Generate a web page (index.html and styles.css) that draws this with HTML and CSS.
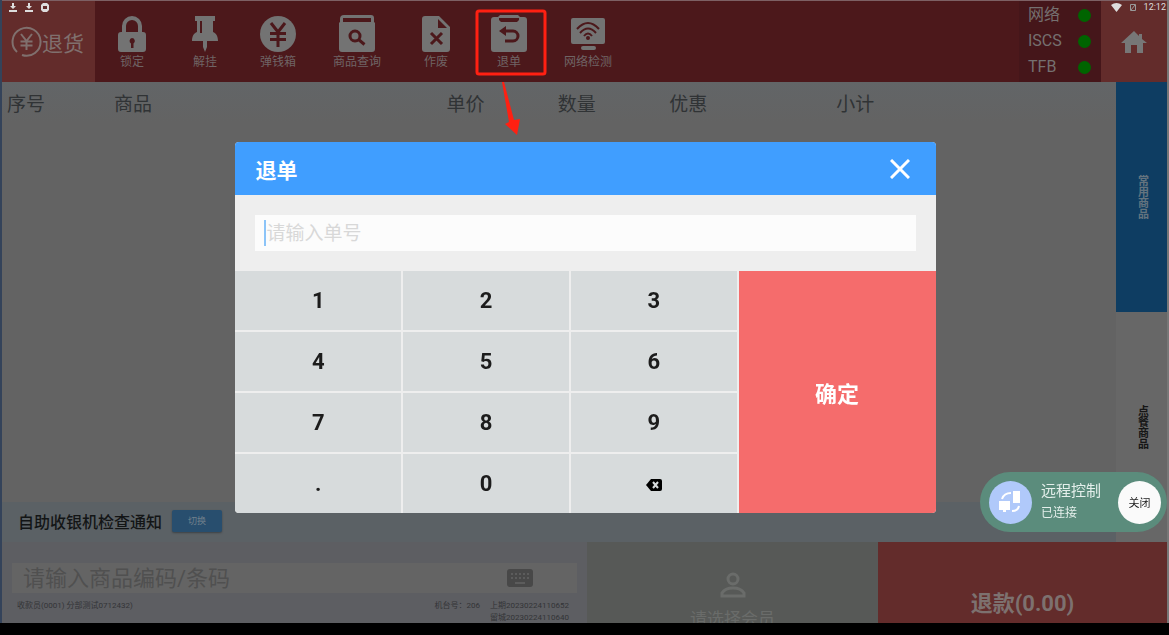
FILE: index.html
```html
<!DOCTYPE html>
<html lang="zh-CN">
<head>
  <meta charset="UTF-8">
  <meta name="viewport" content="width=device-width, initial-scale=1.0">
  <title>收银机 - 退单</title>
  <link rel="stylesheet" href="styles.css">
</head>
<body>
<div class="status-bar">
  <div class="status-left">
    <svg width="8" height="9" viewBox="0 0 8 9"><path d="M3 0h2v3h2L4 6 1 3h2zM0 7h8v2H0z"/></svg>
    <svg width="8" height="9" viewBox="0 0 8 9"><path d="M3 0h2v3h2L4 6 1 3h2zM0 7h8v2H0z"/></svg>
    <svg width="8" height="9" viewBox="0 0 8 9"><path fill-rule="evenodd" d="M2 0h4l2 2v5L6 9H2L0 7V2zM2 3v3h4V3z"/></svg>
  </div>
  <div class="status-right">
    <svg width="11" height="9" viewBox="0 0 11 9"><path d="M0 2Q5.500-2 11 2L5.500 9z"/></svg>
    <svg width="6" height="8" viewBox="0 0 6 8"><path fill="none" stroke="#999" d="M.5 1.500h5v6h-5zM1 7l4-5"/></svg>
    <span>12:12</span>
  </div>
</div>

<header class="topbar">
  <div class="brand">
    <svg width="31" height="31" viewBox="0 0 31 31" fill="none" stroke="currentColor" stroke-width="2">
      <path d="M6 26A14 14 0 1 1 11 29M2 20a14 14 0 0 0 2 4"/>
      <path d="M10 8l5.500 7L21 8M9.500 15.500h12M9.500 19.500h12M15.500 15v9"/>
    </svg>
    <span>退货</span>
  </div>
  <nav class="tools">
    <button class="tool">
      <svg width="36" height="38" viewBox="0 0 36 38"><path fill-rule="evenodd" d="M8 17v-6a10 10 0 0 1 20 0v6h1a3 3 0 0 1 3 3v14a3 3 0 0 1-3 3H7a3 3 0 0 1-3-3V20a3 3 0 0 1 3-3zm4 0h12v-6a6 6 0 0 0-12 0zm6 6a3 3 0 0 0-1 5.500V33h2.500v-4.500A3 3 0 0 0 18 23z"/></svg>
      <span>锁定</span>
    </button>
    <button class="tool">
      <svg width="36" height="38" viewBox="0 0 36 38"><path d="M8 1h20v5h-2v11c3 1 5 4 5 9H20v6l-2 5-2-5v-6H5c0-5 2-8 5-9V6H8z"/><path fill="#4c181b" d="M13 6h2v12h-2z"/></svg>
      <span>解挂</span>
    </button>
    <button class="tool">
      <svg width="36" height="38" viewBox="0 0 36 38"><circle cx="18" cy="19" r="18"/><path class="cut" stroke-width="3" d="M11 8l7 9 7-9M10 18.500h16M10 24.500h16M18 17v15"/></svg>
      <span>弹钱箱</span>
    </button>
    <button class="tool">
      <svg width="36" height="38" viewBox="0 0 36 38"><path fill-rule="evenodd" d="M5 0h27a3 3 0 0 1 3 3v4a2 2 0 0 1 1 2v25a3 3 0 0 1-3 3H3a3 3 0 0 1-3-3V9a2 2 0 0 1 1-2V4a4 4 0 0 1 4-4zM4 3v4h28V3z"/><circle class="cut" cx="16" cy="21" r="5" stroke-width="3"/><path class="cut" stroke-width="3" d="M19.500 24.500l6 5"/></svg>
      <span>商品查询</span>
    </button>
    <button class="tool">
      <svg width="36" height="38" viewBox="0 0 36 38"><path d="M7 1h14l11 11v22a3 3 0 0 1-3 3H7a3 3 0 0 1-3-3V4a3 3 0 0 1 3-3z"/><path fill="#4c181b" d="M20 4v9h9z"/><path class="cut" stroke-width="3" d="M13 18l11 11M24 18L13 29"/></svg>
      <span>作废</span>
    </button>
    <button class="tool marked">
      <svg width="36" height="38" viewBox="0 0 36 38"><path fill-rule="evenodd" d="M9 0h18l2 2h4a3 3 0 0 1 3 3v29a3 3 0 0 1-3 3H3a3 3 0 0 1-3-3V5a3 3 0 0 1 3-3h4zM8 3v2l2 2h16l2-2V3z"/><path class="cut" stroke-width="3" d="M13 16h9a5 5 0 0 1 0 10h-8"/><path fill="#4c181b" d="M8 16l7-5v10z"/></svg>
      <span>退单</span>
      <svg class="mark" width="72" height="128" viewBox="0 0 72 128">
        <rect x="2" y="2" width="68" height="63" rx="2" fill="none" stroke="#ff2012" stroke-width="3"/>
        <path fill="#ff2012" d="M27 73l2 0 10 38 6-1-3 16-12-11 4-2z"/>
      </svg>
    </button>
    <button class="tool">
      <svg width="36" height="38" viewBox="0 0 36 38"><path d="M3 3h30a2 2 0 0 1 2 2v22a2 2 0 0 1-2 2H3a2 2 0 0 1-2-2V5a2 2 0 0 1 2-2zM13 31h11a2 2 0 0 1 0 4H13a2 2 0 0 1 0-4z"/><path class="cut" stroke-width="2" d="M7 14q11-12 22 0M10 18q8-9 16 0M14 21q4-5 8 0"/><circle cx="18" cy="23" r="2" fill="#4c181b"/></svg>
      <span>网络检测</span>
    </button>
  </nav>
  <ul class="links">
    <li>网络<i></i></li>
    <li>ISCS<i></i></li>
    <li>TFB<i></i></li>
  </ul>
  <a class="home" href="#" aria-label="主页">
    <svg width="26" height="22" viewBox="0 0 26 22"><path d="M13 0l5 5V3h3v5l5 4h-4v10h-6v-8h-6v8H4V12H0z"/></svg>
  </a>
</header>

<main class="content">
  <div class="sale">
    <div class="items">
      <table>
        <thead>
          <tr>
            <th class="no">序号</th>
            <th class="name">商品</th>
            <th class="num">单价</th>
            <th class="num">数量</th>
            <th class="num">优惠</th>
            <th class="sum">小计</th>
            <th></th>
          </tr>
        </thead>
      </table>
    </div>
    <div class="notice">
      <span>自助收银机检查通知</span>
      <button>切换</button>
    </div>
  </div>
  <aside class="side">
    <button class="side-tab active">常用商品</button>
    <button class="side-tab">点餐商品</button>
  </aside>
</main>

<footer class="bottom">
  <section class="scan">
    <div class="scan-field">
      <input type="text" aria-label="商品编码" placeholder="请输入商品编码/条码">
      <svg width="26" height="18" viewBox="0 0 26 18"><rect width="26" height="18" rx="3" fill="#484848"/><path stroke="#5c5c5c" stroke-width="2" stroke-dasharray="2 2" d="M4 5h18M4 9h18"/><path stroke="#5c5c5c" stroke-width="2" d="M8 14h10"/></svg>
    </div>
    <div class="scan-info">
      <span class="cashier">收款员(0001) 分部测试0712432)</span>
      <span>机台号：206</span>
      <span class="orders">上期20230224110652<br>留城20230224110640</span>
    </div>
  </section>
  <button class="member">
    <svg width="26" height="26" viewBox="0 0 26 26" fill="none" stroke="currentColor" stroke-width="3"><circle cx="13" cy="7" r="5"/><path d="M2 24v-3q3-5 11-5t11 5v3z"/></svg>
    <span>请选择会员</span>
  </button>
  <button class="refund">退款(0.00)</button>
</footer>

<div class="overlay">
  <div class="dialog" role="dialog" aria-labelledby="dialog-title">
    <div class="dialog-head">
      <h2 id="dialog-title">退单</h2>
      <button class="close" aria-label="关闭">
        <svg width="20" height="20" viewBox="0 0 20 20"><path fill="none" stroke="#fff" stroke-width="3" d="M1 1l18 18M19 1L1 19"/></svg>
      </button>
    </div>
    <div class="dialog-body">
      <div class="order-field">
        <input type="text" aria-label="单号" placeholder="请输入单号">
      </div>
    </div>
    <div class="keypad">
      <button>1</button>
      <button>2</button>
      <button>3</button>
      <button class="confirm">确定</button>
      <button>4</button>
      <button>5</button>
      <button>6</button>
      <button>7</button>
      <button>8</button>
      <button>9</button>
      <button>.</button>
      <button>0</button>
      <button aria-label="删除">
        <svg width="16" height="12" viewBox="0 0 16 12"><path d="M5 0h9a2 2 0 0 1 2 2v8a2 2 0 0 1-2 2H5L0 6z"/><path stroke="#d7dbdc" stroke-width="2" d="M7 3l5 6M12 3L7 9"/></svg>
      </button>
    </div>
  </div>
</div>

<div class="remote">
  <span class="remote-icon">
    <svg width="24" height="24" viewBox="0 0 24 24"><path fill="#fff" d="M15 1h7v12h-7zM1 11h11v9H8v2H5v-2H1z"/><path fill="none" stroke="#fff" stroke-width="2" d="M4 9q2-6 9-6M14 21q6 0 7-5"/></svg>
  </span>
  <div class="remote-text">
    <strong>远程控制</strong>
    <span>已连接</span>
  </div>
  <button>关闭</button>
</div>
</body>
</html>
```
FILE: styles.css
```css
* {
  box-sizing: border-box;
}
html {
  background: #000;
}
body {
  margin: 0;
  height: calc(100vh - 12px);
  display: flex;
  flex-direction: column;
  border-left: 2px solid #34435a;
  border-right: 2px solid #777;
  background: #636363;
  font-family: Roboto, "Noto Sans CJK SC", sans-serif;
  overflow: hidden;
}
button {
  border: none;
  padding: 0;
  background: none;
  color: inherit;
  font-family: inherit;
  cursor: pointer;
}
input {
  border: none;
  outline: none;
  padding: 0;
  min-width: 0;
  flex: 1;
  background: none;
  font-family: inherit;
}

/* Android status bar, over the page */
.status-bar {
  position: absolute;
  top: 2px;
  left: 9px;
  right: 3px;
  display: flex;
  justify-content: space-between;
  color: #ddd;
  fill: #ddd;
  font-size: 9px;
  line-height: 10px;
}
.status-left,
.status-right {
  display: flex;
  align-items: center;
  gap: 8px;
}

/* top bar */
.topbar {
  flex: none;
  display: flex;
  height: 82px;
  background: #4c181b;
  color: #757070;
  border-top: 1px solid #7d6064;
}
.brand {
  width: 93px;
  display: flex;
  align-items: center;
  justify-content: center;
  padding-right: 2px;
  background: #632c2b;
  color: #80706e;
  font-size: 21px;
}
.tools {
  flex: 1;
  display: flex;
  align-items: flex-start;
  gap: 37px;
  padding: 14px 0 0 19px;
}
.tool {
  min-width: 36px;
  display: flex;
  flex-direction: column;
  align-items: center;
  fill: #737373;
  color: #6f6465;
  font-size: 12px;
  line-height: 18px;
}
.cut {
  fill: none;
  stroke: #4c181b;
}
.marked {
  position: relative;
}
.mark {
  position: absolute;
  top: -6px;
  left: -16px;
  z-index: 1;
}
.links {
  width: 82px;
  margin: 0;
  padding: 1px 10px 2px 9px;
  list-style: none;
  background: #45161a;
  font-size: 16px;
  line-height: 26px;
}
.links li {
  display: flex;
  align-items: center;
  justify-content: space-between;
}
.links i {
  width: 13px;
  height: 13px;
  border-radius: 50%;
  background: #006400;
}
.home {
  width: 66px;
  display: flex;
  align-items: center;
  justify-content: center;
  background: #632c2b;
  fill: #777;
}

/* item list */
.content {
  flex: 1;
  display: flex;
  min-height: 0;
}
.sale {
  flex: 1;
  display: flex;
  flex-direction: column;
}
.items {
  flex: 1;
}
.items table {
  width: 100%;
  table-layout: fixed;
  border-collapse: collapse;
  background: linear-gradient(#626567, #636363);
}
.items th {
  height: 40px;
  padding: 0;
  color: #303335;
  font-size: 19px;
  font-weight: 400;
}
.items .no {
  width: 107px;
  padding-left: 5px;
  text-align: left;
}
.items .name {
  width: 27%;
  padding-left: 5px;
  text-align: left;
}
.items .num {
  width: 10%;
}
.items .sum {
  width: 20%;
}
.notice {
  height: 40px;
  display: flex;
  align-items: center;
  gap: 10px;
  padding: 0 0 3px 16px;
  background: #5b6165;
  color: #131516;
  font-size: 16px;
  font-weight: 500;
}
.notice button {
  width: 50px;
  height: 22px;
  border-radius: 2px;
  background: #284e6e;
  box-shadow: 0 1px 2px #3c4246;
  color: #71808c;
  font-size: 9px;
}
.side {
  width: 51px;
  display: flex;
  flex-direction: column;
}
.side-tab {
  flex: 1;
  display: flex;
  align-items: center;
  justify-content: center;
  background: #676767;
  color: #161616;
  font-size: 11px;
  font-weight: 700;
  writing-mode: vertical-rl;
}
.side-tab.active {
  background: #0e3d62;
  color: #64747f;
}

/* bottom row */
.bottom {
  height: 81px;
  display: grid;
  grid-template-columns: 585fr 291fr 289fr;
}
.scan {
  padding: 21px 10px 0;
  background: #5d5e62;
  overflow: hidden;
}
.scan-field {
  height: 30px;
  display: flex;
  align-items: center;
  padding: 0 44px 0 11px;
  background: #646464;
}
.scan-field input {
  font-size: 22px;
}
.scan-field input::placeholder {
  color: #505050;
}
.scan-info {
  display: flex;
  gap: 10px;
  padding: 7px 8px 0 5px;
  color: #333437;
  font-size: 8px;
  line-height: 12px;
}
.cashier {
  flex: 1;
}
.member {
  display: flex;
  flex-direction: column;
  align-items: center;
  gap: 7px;
  padding-top: 30px;
  background: #575957;
  color: #6a6c6a;
  font-size: 17px;
  overflow: hidden;
}
.member svg {
  flex: none;
}
.refund {
  padding-top: 36px;
  background: #632c2b;
  color: #7d716f;
  font-size: 22px;
  font-weight: 700;
}

/* return order dialog */
.overlay {
  position: fixed;
  inset: 0;
  display: flex;
  align-items: flex-start;
  justify-content: center;
  padding: 142px 0 0 2px;
  pointer-events: none;
}
.dialog {
  width: 60%;
  border-radius: 4px;
  background: #eee;
  overflow: hidden;
  pointer-events: auto;
}
.dialog-head {
  height: 53px;
  display: flex;
  align-items: center;
  justify-content: space-between;
  padding: 0 26px 0 20px;
  background: #409eff;
  color: #fff;
}
.dialog-head h2 {
  margin: 0;
  font-size: 21px;
  font-weight: 700;
}
.close {
  display: flex;
}
.dialog-body {
  padding: 20px;
}
.order-field {
  height: 36px;
  display: flex;
  align-items: center;
  padding-left: 9px;
  background: #fcfcfc;
}
/* text cursor */
.order-field::before {
  content: "";
  width: 2px;
  height: 26px;
  background: #8cc4f8;
}
.order-field input {
  font-size: 19px;
}
.order-field input::placeholder {
  color: #d8d8d8;
}
.keypad {
  display: grid;
  grid-template-columns: repeat(3, 1fr) 197px;
  grid-auto-rows: 59px;
  gap: 2px;
}
.keypad button {
  background: #d7dbdc;
  color: #1c1c1c;
  font-size: 22px;
  font-weight: 700;
}
.keypad .confirm {
  grid-column: 4;
  grid-row: 1 / 5;
  background: #f56c6c;
  color: #fff;
}

/* remote control badge */
.remote {
  position: fixed;
  right: 2px;
  bottom: 103px;
  height: 60px;
  display: flex;
  align-items: center;
  gap: 9px;
  padding: 0 6px 0 9px;
  border-radius: 30px;
  background: #5b8c7c;
  color: #e4efeb;
}
.remote-icon,
.remote button {
  width: 43px;
  height: 43px;
  display: flex;
  align-items: center;
  justify-content: center;
  border-radius: 50%;
}
.remote-icon {
  background: #b0c9fa;
}
.remote button {
  margin-left: 8px;
  background: #fafafa;
  color: #222;
  font-size: 11px;
}
.remote-text {
  display: flex;
  flex-direction: column;
  font-size: 12px;
  line-height: 22px;
}
.remote-text strong {
  font-size: 15px;
  font-weight: 400;
}
```
